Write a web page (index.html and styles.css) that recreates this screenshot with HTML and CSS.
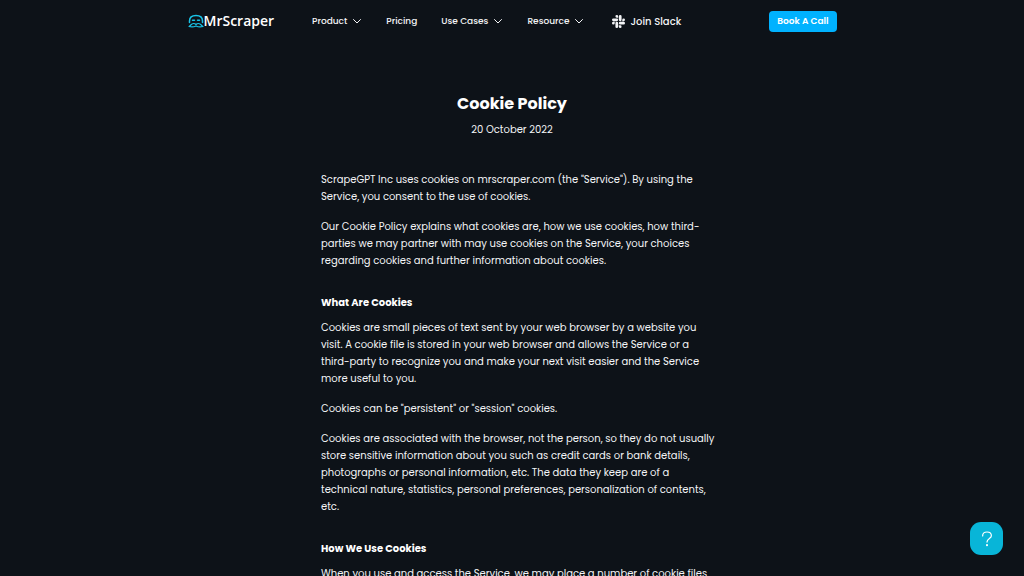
FILE: index.html
```html
<!DOCTYPE html>
<html lang="en">
<head>
<meta charset="utf-8">
<meta name="viewport" content="width=device-width, initial-scale=1">
<title>Cookie Policy - MrScraper</title>
<link rel="stylesheet" href="styles.css">
</head>
<body>
<header class="header">
  <a class="logo" href="#" aria-label="MrScraper">
    <svg class="logo-mark" viewBox="0 0 32 28" fill="none" stroke="#19c3e6" stroke-width="3" stroke-linecap="round" stroke-linejoin="round" aria-hidden="true">
      <path d="M3 17V14C3 7 8 3 16 3S29 7 29 14V17"/>
      <path d="M9 12.500H13M19 12.500H23"/>
      <path d="M2 25C5 24 6 19 11 19C13 19 15 20 16 21C17 20 19 19 21 19C26 19 27 24 30 25C25 26.500 20 26 16 24C12 26 7 26.500 2 25Z" stroke-width="2.400"/>
    </svg>
    <span>MrScraper</span>
  </a>
  <nav class="nav" aria-label="Main">
    <button class="nav-item" type="button">Product
      <svg class="chevron" viewBox="0 0 10 10" aria-hidden="true"><path d="M1.500 3.500 5 7 8.500 3.500"/></svg>
    </button>
    <a class="nav-item" href="#">Pricing</a>
    <button class="nav-item" type="button">Use Cases
      <svg class="chevron" viewBox="0 0 10 10" aria-hidden="true"><path d="M1.500 3.500 5 7 8.500 3.500"/></svg>
    </button>
    <button class="nav-item" type="button">Resource
      <svg class="chevron" viewBox="0 0 10 10" aria-hidden="true"><path d="M1.500 3.500 5 7 8.500 3.500"/></svg>
    </button>
    <a class="nav-item slack" href="#">
      <svg class="slack-mark" viewBox="0 0 24 24" fill="currentColor" aria-hidden="true">
        <path d="M5.042 15.165a2.528 2.528 0 0 1-2.520 2.523A2.528 2.528 0 0 1 0 15.165a2.527 2.527 0 0 1 2.522-2.520h2.520v2.520zM6.313 15.165a2.527 2.527 0 0 1 2.521-2.520 2.527 2.527 0 0 1 2.521 2.520v6.313A2.528 2.528 0 0 1 8.834 24a2.528 2.528 0 0 1-2.521-2.522v-6.313zM8.834 5.042a2.528 2.528 0 0 1-2.521-2.520A2.528 2.528 0 0 1 8.834 0a2.528 2.528 0 0 1 2.521 2.522v2.520H8.834zM8.834 6.313a2.528 2.528 0 0 1 2.521 2.521 2.528 2.528 0 0 1-2.521 2.521H2.522A2.528 2.528 0 0 1 0 8.834a2.528 2.528 0 0 1 2.522-2.521h6.312zM18.956 8.834a2.528 2.528 0 0 1 2.522-2.521A2.528 2.528 0 0 1 24 8.834a2.528 2.528 0 0 1-2.522 2.521h-2.522V8.834zM17.688 8.834a2.528 2.528 0 0 1-2.523 2.521 2.527 2.527 0 0 1-2.520-2.521V2.522A2.527 2.527 0 0 1 15.165 0a2.528 2.528 0 0 1 2.523 2.522v6.312zM15.165 18.956a2.528 2.528 0 0 1 2.523 2.522A2.528 2.528 0 0 1 15.165 24a2.527 2.527 0 0 1-2.520-2.522v-2.522h2.520zM15.165 17.688a2.527 2.527 0 0 1-2.520-2.523 2.526 2.526 0 0 1 2.520-2.520h6.313A2.527 2.527 0 0 1 24 15.165a2.528 2.528 0 0 1-2.522 2.523h-6.313z"/>
      </svg>
      Join Slack
    </a>
  </nav>
  <a class="cta" href="#">Book A Call</a>
</header>

<main class="policy">
  <div class="intro">
    <h1 class="title">Cookie Policy</h1>
    <p class="date">20 October 2022</p>
  </div>
  <div class="content">
    <p>ScrapeGPT Inc uses cookies on mrscraper.com (the "Service"). By using the Service, you consent to the use of cookies.</p>
    <p>Our Cookie Policy explains what cookies are, how we use cookies, how third-parties we may partner with may use cookies on the Service, your choices regarding cookies and further information about cookies.</p>
    <h2>What Are Cookies</h2>
    <p>Cookies are small pieces of text sent by your web browser by a website you visit. A cookie file is stored in your web browser and allows the Service or a third-party to recognize you and make your next visit easier and the Service more useful to you.</p>
    <p>Cookies can be "persistent" or "session" cookies.</p>
    <p>Cookies are associated with the browser, not the person, so they do not usually store sensitive information about you such as credit cards or bank details, photographs or personal information, etc. The data they keep are of a technical nature, statistics, personal preferences, personalization of contents, etc.</p>
    <h2>How We Use Cookies</h2>
    <p>When you use and access the Service, we may place a number of cookie files</p>
  </div>
</main>

<button class="help" type="button" aria-label="Help">
  <svg class="help-icon" viewBox="0 0 16 20" fill="none" stroke="currentColor" stroke-width="1.400" stroke-linecap="round" aria-hidden="true">
    <path d="M3 6.500C3 3.500 5 2 8 2S13 3.500 13 6.200C13 9.500 8 9.300 8 13.500"/>
    <circle cx="8" cy="17" r=".5"/>
  </svg>
</button>
</body>
</html>
```
FILE: styles.css
```css
* {
  box-sizing: border-box;
}

html {
  background: #0d1218;
}

body {
  margin: 0;
  height: 100vh;
  overflow: hidden;
  color: #f3f4f6;
  font-family: Poppins, Inter, "Liberation Sans", sans-serif;
  font-size: 10px;
  line-height: 17px;
}

a,
button {
  color: inherit;
  font: inherit;
  text-decoration: none;
}

button {
  padding: 0;
  border: 0;
  background: none;
  cursor: pointer;
}

.header {
  display: flex;
  align-items: center;
  max-width: 649px;
  height: 42px;
  margin: 0 auto;
  white-space: nowrap;
}

.logo {
  display: flex;
  align-items: center;
  color: #fff;
  font: 600 14px/20px "Open Sans", "Noto Sans", sans-serif;
}

.logo-mark {
  width: 16px;
  height: 14px;
}

.nav {
  display: flex;
  flex: 1;
  align-items: center;
  gap: 24px;
  margin-left: 38px;
  font-size: 9px;
  font-weight: 500;
}

.nav-item {
  display: flex;
  align-items: center;
  gap: 5px;
}

.chevron {
  width: 10px;
  height: 10px;
  fill: none;
  stroke: currentColor;
  stroke-width: 1;
  stroke-linecap: round;
  stroke-linejoin: round;
}

.slack {
  margin-left: 4px;
  font-size: 10px;
  font-weight: 500;
}

.slack-mark {
  width: 13px;
  height: 13px;
}

.cta {
  padding: 2px 8px;
  border-radius: 4px;
  background: #00b2ff;
  color: #fff;
  font-size: 9px;
  font-weight: 600;
}

.policy {
  max-width: 382px;
  margin: 0 auto;
  padding-top: 50px;
}

.intro {
  margin-bottom: 33px;
  text-align: center;
}

.title {
  margin: 0;
  color: #fff;
  font-size: 16px;
  line-height: 24px;
}

.date {
  margin: 5px 0 0;
}

.content {
  margin-right: -13px;
}

.content p {
  margin: 0 0 13px;
}

.content h2 {
  margin: 25px 0 8px;
  color: #fff;
  font-size: 10px;
  line-height: 17px;
}

.help {
  position: fixed;
  right: 21px;
  bottom: 21px;
  display: grid;
  place-items: center;
  width: 33px;
  height: 33px;
  border-radius: 11px;
  background: #08b5d8;
  color: #fff;
}

.help-icon {
  width: 14px;
  height: 18px;
}
```
